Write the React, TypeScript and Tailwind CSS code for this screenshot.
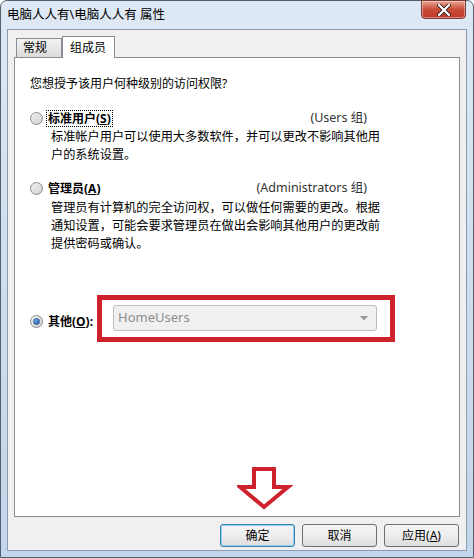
import React from "react";

const FONT = { fontFamily: '"Noto Sans", "Noto Sans CJK SC", sans-serif' };

function Radio({ checked }: { checked?: boolean }) {
  return (
    <div className="w-[13px] h-[13px] rounded-full border border-[#8a8a8a] bg-gradient-to-br from-[#f4f4f4] to-[#cfcfcf] flex items-center justify-center shrink-0">
      {checked ? (
        <div className="w-[7px] h-[7px] rounded-full bg-gradient-to-br from-[#7fb6ea] to-[#1b5ea8] border border-[#2a5f9c]" />
      ) : (
        <div className="w-[9px] h-[9px] rounded-full bg-gradient-to-br from-[#e9e9e9] to-[#d8d8d8]" />
      )}
    </div>
  );
}

function Button({ children, focused }: { children: React.ReactNode; focused?: boolean }) {
  return (
    <div
      className={
        "w-[75px] h-[23px] rounded-[3px] flex items-center justify-center text-[12px] text-black bg-gradient-to-b from-[#f4f4f4] via-[#eeeeee] to-[#dcdcdc] " +
        (focused ? "border border-[#3c7fb1] shadow-[inset_0_0_0_1px_#8fd3f4]" : "border border-[#707070]")
      }
    >
      {children}
    </div>
  );
}

export default function App() {
  return (
    <div className="w-[474px] h-[558px] relative overflow-hidden bg-white" style={FONT}>
      <div className="w-[474px] h-[558px] rounded-t-[7px] border border-[#55606c] bg-gradient-to-b from-[#dfe9f5] via-[#cfdded] to-[#c3d5ea] flex flex-col">
        {/* title bar */}
        <div className="h-[28px] flex items-start justify-between pl-[6px] pr-[7px]">
          <div className="text-[12.5px] text-black leading-[28px] whitespace-nowrap">电脑人人有\电脑人人有 属性</div>
          <div className="w-[45px] h-[19px] -mt-[1px] rounded-b-[4px] border border-[#7a3a35] bg-gradient-to-b from-[#e8a493] via-[#c94a34] to-[#c0392b] flex items-center justify-center shadow-[inset_0_0_0_1px_rgba(255,255,255,0.4)]">
            <svg width="14" height="12" viewBox="0 0 14 12">
              <path d="M2 1 L12 11 M12 1 L2 11" stroke="#3a2422" strokeWidth="4" strokeLinecap="round" />
              <path d="M2 1 L12 11 M12 1 L2 11" stroke="#ffffff" strokeWidth="2.2" strokeLinecap="round" />
            </svg>
          </div>
        </div>

        {/* dialog body */}
        <div className="mx-[6px] h-[522px] bg-[#f0f0f0] border border-[#8c9cb0] flex flex-col">
          {/* tabs */}
          <div className="pl-[8px] pt-[6px] flex items-end h-[27px]">
            <div className="w-[46px] h-[19px] border border-b-0 border-[#898c95] bg-gradient-to-b from-[#f2f2f2] to-[#dcdcdc] text-[12px] flex items-center pl-[6px] text-black">
              常规
            </div>
            <div className="w-[53px] h-[22px] border border-b-0 border-[#898c95] bg-white text-[12px] flex items-start pt-[2px] pl-[7px] text-black -mb-[1px] relative z-10">
              组成员
            </div>
          </div>
          {/* panel */}
          <div className="mx-[6px] h-[460px] bg-white border border-[#898c95] relative">
            <div className="pl-[15px] pt-[17px] text-[12px] text-black">
              <div className="leading-[18px] whitespace-nowrap">您想授予该用户何种级别的访问权限?</div>

              <div className="mt-[16px] w-[337px] flex items-center justify-between h-[18px]">
                <div className="flex items-center gap-[3px]">
                  <Radio />
                  <span className="font-bold border border-dotted border-black px-[1px] leading-[15px]">
                    标准用户(<span className="underline">S</span>)
                  </span>
                </div>
                <span className="text-[12.5px] text-[#333]">(Users 组)</span>
              </div>
              <div className="pl-[21px] mt-[1px] leading-[18px] whitespace-nowrap text-[12.2px]">
                标准帐户用户可以使用大多数软件，并可以更改不影响其他用
                <br />
                户的系统设置。
              </div>

              <div className="mt-[15px] w-[337px] flex items-center justify-between h-[18px]">
                <div className="flex items-center gap-[4px]">
                  <Radio />
                  <span className="font-bold leading-[15px] px-[1px]">
                    管理员(<span className="underline">A</span>)
                  </span>
                </div>
                <span className="text-[12.5px] text-[#333]">(Administrators 组)</span>
              </div>
              <div className="pl-[21px] mt-[2px] leading-[18px] whitespace-nowrap text-[12.2px]">
                管理员有计算机的完全访问权，可以做任何需要的更改。根据
                <br />
                通知设置，可能会要求管理员在做出会影响其他用户的更改前
                <br />
                提供密码或确认。
              </div>

              <div className="mt-[52px] flex items-center h-[26px]">
                <div className="flex items-center gap-[4px] mt-[6px]">
                  <Radio checked />
                  <span className="font-bold leading-[15px] px-[1px]">
                    其他(<span className="underline">O</span>):
                  </span>
                </div>
                <div className="ml-[19px] w-[264px] h-[26px] rounded-[3px] border border-[#bdbdbd] bg-[#f0f0f0] flex items-center justify-between pl-[4px] pr-[8px]">
                  <span className="text-[13px] text-[#8d8d8d]">HomeUsers</span>
                  <svg width="8" height="5" viewBox="0 0 8 5">
                    <path d="M0 0 L8 0 L4 4.5 Z" fill="#9a9a9a" />
                  </svg>
                </div>
              </div>
            </div>
          </div>

          {/* buttons */}
          <div className="flex justify-end gap-[7px] pr-[7px] mt-[7px]">
            <Button focused>确定</Button>
            <Button>取消</Button>
            <Button>
              应用(<span className="underline">A</span>)
            </Button>
          </div>
        </div>
      </div>

      {/* red annotation box */}
      <div className="absolute left-[97px] top-[295px] w-[298px] h-[47px] border-[5px] border-[#d0222c] pointer-events-none" />

      {/* red arrow */}
      <svg className="absolute left-[237px] top-[466px]" width="56" height="44" viewBox="0 0 56 44">
        <path
          d="M17 3 L37 3 L37 21 L51 21 L27 41 L3 21 L17 21 Z"
          fill="white"
          stroke="#d0222c"
          strokeWidth="4"
          strokeLinejoin="miter"
        />
      </svg>
    </div>
  );
}
